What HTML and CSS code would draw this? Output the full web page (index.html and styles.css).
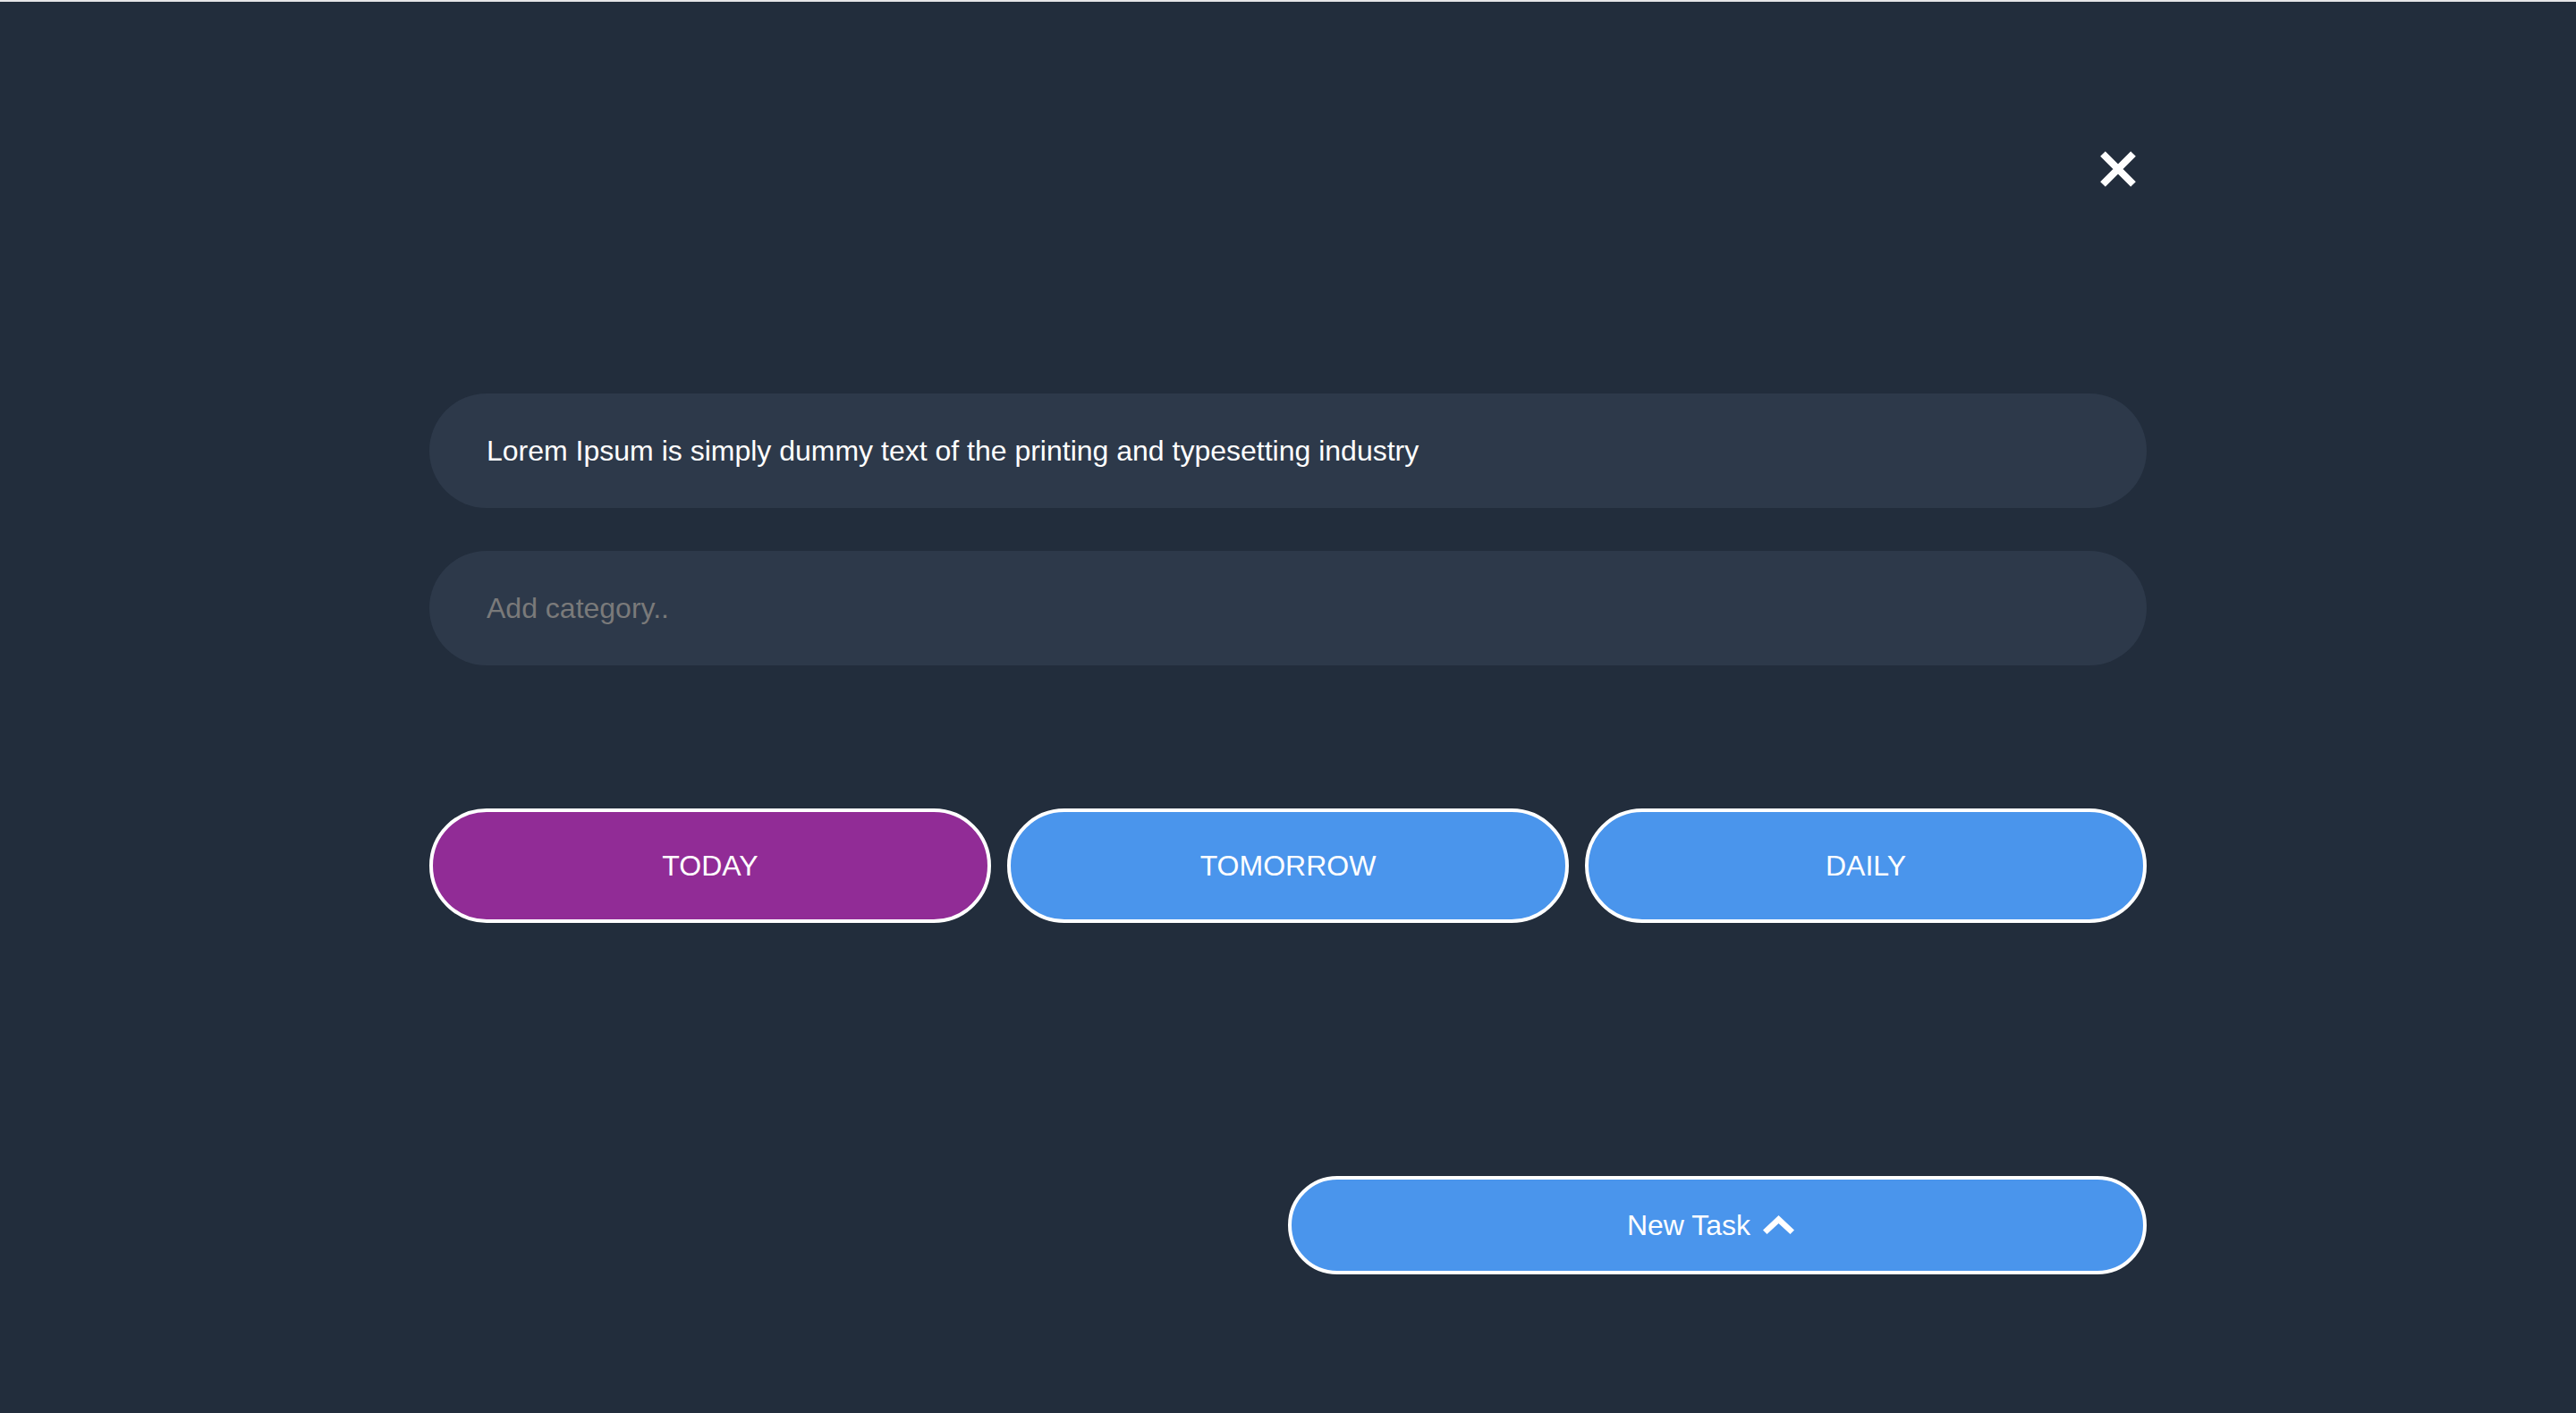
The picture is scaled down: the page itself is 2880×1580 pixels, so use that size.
FILE: index.html
```html
<!DOCTYPE html>
<html lang="en">
<head>
<meta charset="utf-8">
<title>New Task</title>
<link rel="stylesheet" href="styles.css">
</head>
<body>
<div class="page">
  <div class="topbar">
    <button class="close" aria-label="Close">
      <svg width="40" height="40" viewBox="0 0 40 40"><path d="M3 3 L37 37 M37 3 L3 37" stroke="#fff" stroke-width="8" stroke-linecap="butt" fill="none"/></svg>
    </button>
  </div>
  <div class="fields">
    <input class="field" type="text" value="Lorem Ipsum is simply dummy text of the printing and typesetting industry">
    <input class="field" type="text" placeholder="Add category..">
  </div>
  <div class="when">
    <button class="pill pill-active">TODAY</button>
    <button class="pill">TOMORROW</button>
    <button class="pill">DAILY</button>
  </div>
  <div class="actions">
    <button class="new-task">New Task
      <svg class="chev" width="35" height="21" viewBox="0 0 35 21"><polygon points="17.5,0 35,16.5 30.5,21 17.5,9 4.5,21 0,16.5" fill="#fff"/></svg>
    </button>
  </div>
</div>
</body>
</html>
```

FILE: styles.css
```css
* { box-sizing: border-box; }

html, body {
  margin: 0;
  padding: 0;
}

body {
  background: #222d3c;
  border-top: 2px solid #e6e6e8;
  min-height: 1580px;
  font-family: "Liberation Sans", Arial, Helvetica, sans-serif;
  color: #fff;
}

.page {
  width: 1920px;
  margin: 0 auto;
  display: flex;
  flex-direction: column;
}

.topbar {
  display: flex;
  justify-content: flex-end;
  padding-top: 167px;
  padding-right: 12px;
}

.close {
  width: 40px;
  height: 40px;
  padding: 0;
  border: none;
  background: transparent;
  display: block;
  cursor: pointer;
}

.close svg { display: block; }

.fields {
  margin-top: 231px;
  display: flex;
  flex-direction: column;
  gap: 48px;
}

.field {
  width: 100%;
  height: 128px;
  border: none;
  outline: none;
  border-radius: 64px;
  background: #2d394a;
  padding: 0 64px;
  font-family: "Liberation Sans", Arial, Helvetica, sans-serif;
  font-size: 32px;
  color: #fff;
}

.field::placeholder {
  color: #7a7a7a;
}

.when {
  margin-top: 160px;
  display: grid;
  grid-template-columns: repeat(3, 1fr);
  gap: 18px;
}

.pill {
  height: 128px;
  border: 4px solid #fff;
  border-radius: 64px;
  background: #4a95ec;
  color: #fff;
  font-family: "Liberation Sans", Arial, Helvetica, sans-serif;
  font-size: 32px;
  cursor: pointer;
}

.pill-active {
  background: #912c96;
}

.actions {
  margin-top: 283px;
  display: flex;
  justify-content: flex-end;
}

.new-task {
  width: 960px;
  height: 110px;
  border: 4px solid #fff;
  border-radius: 55px;
  background: #4a95ec;
  color: #fff;
  font-family: "Liberation Sans", Arial, Helvetica, sans-serif;
  font-size: 32px;
  display: flex;
  align-items: center;
  justify-content: center;
  cursor: pointer;
}

.chev {
  display: block;
  margin-left: 14px;
  margin-right: 15px;
  margin-top: -2px;
}
```
